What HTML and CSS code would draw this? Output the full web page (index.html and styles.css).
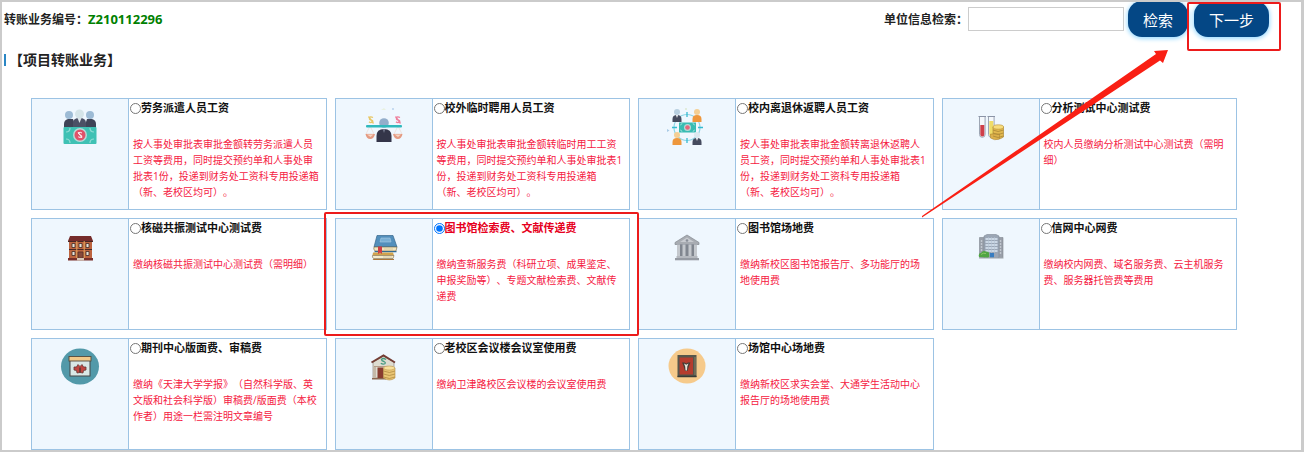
FILE: index.html
```html
<!DOCTYPE html>
<html lang="zh-CN">
<head>
    <meta charset="UTF-8">
    <meta name="viewport" content="width=device-width, initial-scale=1.0">
    <title>项目转账业务</title>
    <link rel="stylesheet" href="styles.css">
</head>
<body>

<form class="page">
    <!-- 顶部：业务编号和检索 -->
    <header class="topbar">
        <div class="biz-no">转账业务编号：<span class="biz-no-value">Z210112296</span></div>
        <div class="search">
            <label for="unitSearch">单位信息检索：</label>
            <input type="text" id="unitSearch" name="unitSearch">
            <button type="button" class="btn">检索</button>
            <div class="next-step">
                <button type="button" class="btn">下一步</button>
            </div>
        </div>
    </header>

    <h1 class="section-title">【项目转账业务】</h1>

    <!-- 业务列表 -->
    <div class="card-grid">
        <div class="card">
            <div class="card-icon">
                <svg viewBox="0 0 40 40" aria-hidden="true">
                    <path d="M4 21v-4q0-4 4-5h5l3 9zM36 21v-4q0-4-4-5h-5l-3 9z" fill="#3f4357"/>
                    <circle cx="9" cy="8" r="4" fill="#9dbbd5"/>
                    <circle cx="30" cy="8" r="4" fill="#9dbbd5"/>
                    <path d="M13 21v-5q0-5 6.500-5t6.500 5v5z" fill="#4b5065"/>
                    <path d="M17.500 11l2 5 2-5z" fill="#dfe6ea"/>
                    <circle cx="19.500" cy="7" r="4.500" fill="#d5e4e8"/>
                    <rect x="3.500" y="20" width="33" height="17" rx="1" fill="#3fc1b4"/>
                    <path d="M6 25q4 0 4-4M34 25q-4 0-4-4M6 32q4 0 4 4M34 32q-4 0-4 4" fill="none" stroke="#8fdcd4" stroke-width="1.200"/>
                    <circle cx="20" cy="28" r="7" fill="#b9d9d8"/>
                    <circle cx="20" cy="28" r="5.500" fill="#e0526a"/>
                    <path d="M22 26q-2-1.500-3.500 0 0 1.300 1.700 1.800 2 .6 1.600 2-1.600 1.400-3.600 0M18 25l4 6" fill="none" stroke="#fff" stroke-width=".9"/>
                </svg>
            </div>
            <div class="card-body">
                <label class="card-title"><input type="radio" name="biz">劳务派遣人员工资</label>
                <p class="card-desc">按人事处审批表审批金额转劳务派遣人员工资等费用，同时提交预约单和人事处审批表1份，投递到财务处工资科专用投递箱（新、老校区均可）。</p>
            </div>
        </div>

        <div class="card">
            <div class="card-icon">
                <svg viewBox="0 0 40 40" aria-hidden="true">
                    <path d="M17 2.500l3-1 2 1z" fill="#e3ebc4"/>
                    <circle cx="29" cy="2" r="1" fill="#b9d2ec"/>
                    <path d="M9 10.500q-3-1.500-3.500.5t2 2q2 .8 1 2.200-2 1-3.500-.4M4.500 9.500l5 7" fill="none" stroke="#e8c766" stroke-width="1.300"/>
                    <path d="M36 10.500q-3-1.500-3.500.5t2 2q2 .8 1 2.200-2 1-3.500-.4M31.500 9.500l5 7" fill="none" stroke="#ee7d9a" stroke-width="1.300"/>
                    <path d="M6 19l-4 8h8zM34 19l-4 8h8z" fill="none" stroke="#edd5cb" stroke-width=".6"/>
                    <circle cx="20" cy="16" r="4.800" fill="#93aecb"/>
                    <rect x="2" y="18" width="36" height="2.500" rx="1" fill="#30b9bd"/>
                    <path d="M1.500 27h9.500q-1 5-4.800 5t-4.700-5zM29 27h9.500q-1 5-4.700 5T29 27z" fill="#e49b83"/>
                    <path d="M3 27.500h6.500l-3 2.500zM30.500 27.500H37L34 30z" fill="#f6d6c4"/>
                    <path d="M12.500 35v-6q0-7 7.500-7t7.500 7v6z" fill="#343549"/>
                    <path d="M18.500 22h3l-1.500 4z" fill="#6f7388"/>
                </svg>
            </div>
            <div class="card-body">
                <label class="card-title"><input type="radio" name="biz">校外临时聘用人员工资</label>
                <p class="card-desc">按人事处审批表审批金额转临时用工工资等费用，同时提交预约单和人事处审批表1份，投递到财务处工资科专用投递箱（新、老校区均可）。</p>
            </div>
        </div>

        <div class="card">
            <div class="card-icon">
                <svg viewBox="0 0 40 40" aria-hidden="true">
                    <circle cx="20" cy="20.500" r="13" fill="none" stroke="#8fd6e6" stroke-width="1.200"/>
                    <path d="M20 5v5M20 31v5M5 20.500h5M31 20.500h5" stroke="#36bad0" stroke-width="1.300"/>
                    <path d="M0 22l2.500 1.500L0 25z" fill="#a9cbe6"/>
                    <circle cx="19" cy="2" r="1" fill="#dce8d0"/>
                    <rect x="12" y="15.500" width="17" height="10" fill="#38bcb3"/>
                    <path d="M13 18q2 0 2-2M28 18q-2 0-2-2M13 23q2 0 2 2M28 23q-2 0-2 2" fill="none" stroke="#a1e0da" stroke-width=".8"/>
                    <circle cx="20.500" cy="20.500" r="3.500" fill="#b5d9d6"/>
                    <circle cx="20.500" cy="20.500" r="2.300" fill="#e4667b"/>
                    <circle cx="10" cy="5" r="3" fill="#b8cfe0"/>
                    <path d="M5.500 15v-3q0-4 4.500-4t4.500 4v3z" fill="#454b5e"/>
                    <circle cx="30" cy="5" r="3" fill="#f4cf94"/>
                    <path d="M25.500 15v-3q0-4 4.500-4t4.500 4v3z" fill="#ee973c"/>
                    <circle cx="10" cy="28" r="3" fill="#f4cf94"/>
                    <path d="M5.500 38v-3q0-4 4.500-4t4.500 4v3z" fill="#ee973c"/>
                    <circle cx="30" cy="28" r="3" fill="#dce8ef"/>
                    <path d="M25.500 38v-3q0-4 4.500-4t4.500 4v3z" fill="#454b5e"/>
                    <path d="M9 8h2l-1 3zM29 31h2l-1 3z" fill="#fff"/>
                </svg>
            </div>
            <div class="card-body">
                <label class="card-title"><input type="radio" name="biz">校内离退休返聘人员工资</label>
                <p class="card-desc">按人事处审批表审批金额转离退休返聘人员工资，同时提交预约单和人事处审批表1份，投递到财务处工资科专用投递箱（新、老校区均可）。</p>
            </div>
        </div>

        <div class="card">
            <div class="card-icon">
                <svg viewBox="0 0 40 40" aria-hidden="true">
                    <path d="M8.500 9.500v18a2.800 2.800 0 0 0 5.600 0v-18z" fill="#f4f8fc" stroke="#939cac" stroke-width=".9"/>
                    <path d="M9.300 18h4v9.500a2 2 0 0 1-4 0z" fill="#cf3f49"/>
                    <path d="M17.500 9.500v18a2.800 2.800 0 0 0 5.600 0v-18z" fill="#f4f8fc" stroke="#939cac" stroke-width=".9"/>
                    <path d="M18.300 14h4v13.500a2 2 0 0 1-4 0z" fill="#efdc67"/>
                    <path d="M7.500 9.500h7.500M16.500 9.500h7.500" stroke="#8b94a7" stroke-width="1.200"/>
                    <path d="M22 20v10q5 4 10.500 0V20z" fill="#e2b84e" stroke="#a67f2b" stroke-width=".6"/>
                    <path d="M19.500 27v4q4 3 9 1v-5z" fill="#dcb04a" stroke="#a67f2b" stroke-width=".5"/>
                    <path d="M22 23q5 3 10.500 0M22 26q5 3 10.500 0M22 29q5 3 10.500 0" fill="none" stroke="#a98736" stroke-width=".8"/>
                    <ellipse cx="27.300" cy="20" rx="5.300" ry="2.200" fill="#f7dc7c" stroke="#b58d32" stroke-width=".6"/>
                </svg>
            </div>
            <div class="card-body">
                <label class="card-title"><input type="radio" name="biz">分析测试中心测试费</label>
                <p class="card-desc">校内人员缴纳分析测试中心测试费（需明细）</p>
            </div>
        </div>

        <div class="card">
            <div class="card-icon">
                <svg viewBox="0 0 40 40" aria-hidden="true">
                    <rect x="9" y="13" width="23" height="19" fill="#bd643f"/>
                    <path d="M8 14l2-5h21l2 5z" fill="#752c2b"/>
                    <path d="M8 14.500h25M9 22.500h23" stroke="#4a2725" stroke-width="1"/>
                    <g fill="#e4e3dc" stroke="#51352e" stroke-width=".9">
                        <path d="M12 16.500h3v4h-3zM19 16.500h3v4h-3zM26 16.500h3v4h-3zM12 24.500h3v4h-3zM26 24.500h3v4h-3z"/>
                    </g>
                    <path d="M16.800 14v17M24.200 14v17" stroke="#e3a85e" stroke-width="1"/>
                    <path d="M18 31v-6h5v6z" fill="#87493b" stroke="#57302a" stroke-width=".8"/>
                    <path d="M8 31h25v2.500H8z" fill="#792f2b"/>
                    <path d="M17 31h7v2.500h-7z" fill="#d9c9b9"/>
                </svg>
            </div>
            <div class="card-body">
                <label class="card-title"><input type="radio" name="biz">核磁共振测试中心测试费</label>
                <p class="card-desc">缴纳核磁共振测试中心测试费（需明细）</p>
            </div>
        </div>

        <div class="card card-selected">
            <div class="card-icon">
                <svg viewBox="0 0 40 40" aria-hidden="true">
                    <path d="M13 8.500h16L33 20H10z" fill="#528fbc" stroke="#36658b" stroke-width=".7"/>
                    <path d="M17 11h9l1 4H16z" fill="#79afd5" stroke="#a8cbe2" stroke-width=".6"/>
                    <path d="M10 20h23l-1 4H11q-2-2-1-4z" fill="#f1e5bf" stroke="#75613e" stroke-width=".6"/>
                    <path d="M11 24h21.500v1.200H10z" fill="#326b95"/>
                    <path d="M9 25.500h20l1 3H8.500z" fill="#d1a34c"/>
                    <path d="M8.500 28.500H30L29 31.500H9.500q-1.700-1.500-1-3z" fill="#f4eccd" stroke="#796443" stroke-width=".6"/>
                    <path d="M8.500 32H30v1H9.500z" fill="#a9773b"/>
                    <path d="M14 19.500h4v7.500l-2-1.500-2 1.500z" fill="#cd3e46"/>
                    <path d="M20 22h9M19 30h9" stroke="#cbbd94" stroke-width=".7"/>
                </svg>
            </div>
            <div class="card-body">
                <label class="card-title"><input type="radio" name="biz" checked>图书馆检索费、文献传递费</label>
                <p class="card-desc">缴纳查新服务费（科研立项、成果鉴定、申报奖励等）、专题文献检索费、文献传递费</p>
            </div>
        </div>

        <div class="card">
            <div class="card-icon">
                <svg viewBox="0 0 40 40" aria-hidden="true">
                    <path d="M8 15.500L20 8l12 7.500v2H8z" fill="#a8acb2" stroke="#858a91" stroke-width=".7"/>
                    <path d="M13 15l7-4.500 7 4.500z" fill="#c8cbd0"/>
                    <circle cx="20" cy="13.500" r="1.300" fill="#898f98"/>
                    <rect x="10" y="17.500" width="20" height="12" fill="#80868f"/>
                    <path d="M10 17.500h3v12h-3zM15.500 17.500h3v12h-3zM21.500 17.500h3v12h-3zM27 17.500h3v12h-3z" fill="#c4c8cd"/>
                    <path d="M9.500 29h21v2h-21z" fill="#b5b9bf"/>
                    <path d="M8 31h24v2.300H8z" fill="#969ba3"/>
                </svg>
            </div>
            <div class="card-body">
                <label class="card-title"><input type="radio" name="biz">图书馆场地费</label>
                <p class="card-desc">缴纳新校区图书馆报告厅、多功能厅的场地使用费</p>
            </div>
        </div>

        <div class="card">
            <div class="card-icon">
                <svg viewBox="0 0 40 40" aria-hidden="true">
                    <path d="M8.500 10.500h5v20h-5zM27 10.500h5v20h-5z" fill="#999fa9" stroke="#80868f" stroke-width=".6"/>
                    <path d="M13 9l3-1.500h9L28 9v21.500H13z" fill="#9ba6b5" stroke="#808995" stroke-width=".6"/>
                    <path d="M14.500 12h12M14.500 15h12M14.500 18h12M14.500 21h12M14.500 24h12" stroke="#dce8f3" stroke-width="1.600"/>
                    <path d="M17.500 10v16M20.500 10v16M23.500 10v16" stroke="#b4c3d4" stroke-width=".6"/>
                    <path d="M29.500 13v15M10.500 13v12" stroke="#c1c7cf" stroke-width="1.400" stroke-dasharray="2 1"/>
                    <path d="M19 26h4v4.500h-4z" fill="#387dc1"/>
                    <path d="M8 30.500h24.500v1H8z" fill="#9da2a8"/>
                    <path d="M8 30q-1-4 2-4 2-3 5-1.500 4 0 3 3.500 1 2-1 2.500z" fill="#50a543"/>
                    <path d="M10 27.500q2-2 5-1" stroke="#8cc668" stroke-width="1" fill="none"/>
                </svg>
            </div>
            <div class="card-body">
                <label class="card-title"><input type="radio" name="biz">信网中心网费</label>
                <p class="card-desc">缴纳校内网费、域名服务费、云主机服务费、服务器托管费等费用</p>
            </div>
        </div>

        <div class="card">
            <div class="card-icon">
                <svg viewBox="0 0 40 40" aria-hidden="true">
                    <ellipse cx="20" cy="19.500" rx="19" ry="18" fill="#5299a9"/>
                    <rect x="10" y="13" width="20" height="16" fill="#d9e8e6" stroke="#454746" stroke-width="1"/>
                    <rect x="9" y="9.500" width="22" height="4.500" fill="#f0c989" stroke="#55493b" stroke-width=".9"/>
                    <path d="M20 19.500l-2-2-1.500 2.500-2.500 0 0 3 2.500.5.500 2.500 3-.5 3 .5.500-2.500 2.500-.5 0-3-2.500 0-1.500-2.500z" fill="#c24741" stroke="#633936" stroke-width=".8"/>
                    <path d="M20 20.500v5" stroke="#56372f" stroke-width="1.500"/>
                </svg>
            </div>
            <div class="card-body">
                <label class="card-title"><input type="radio" name="biz">期刊中心版面费、审稿费</label>
                <p class="card-desc">缴纳《天津大学学报》（自然科学版、英文版和社会科学版）审稿费/版面费（本校作者）用途一栏需注明文章编号</p>
            </div>
        </div>

        <div class="card">
            <div class="card-icon">
                <svg viewBox="0 0 40 40" aria-hidden="true">
                    <path d="M9 15l10.500-6L30 15v16H9z" fill="#dedcd0" stroke="#827366" stroke-width=".6"/>
                    <path d="M7.500 15.500L19.500 8.500 31 15.500" fill="none" stroke="#733d34" stroke-width="2"/>
                    <path d="M22 12.500q-3-2-4.500 0 0 1.500 2.500 2 2 1 .8 2.200-1.800 1-4-.5" fill="none" stroke="#459b81" stroke-width="1.300"/>
                    <path d="M10 19.500h19" stroke="#b49c87" stroke-width="1"/>
                    <path d="M13.500 20.500h6V31h-6z" fill="#893c2f"/>
                    <path d="M9 20h3v11H9z" fill="#c4b8a7"/>
                    <path d="M8 31h14v1.500H8z" fill="#8b6851"/>
                    <path d="M19.500 21v10q6 4 11.500 0V21z" fill="#e9c574" stroke="#b58e45" stroke-width=".6"/>
                    <path d="M19.500 24q6 3 11.500 0M19.500 27q6 3 11.500 0M19.500 30q6 3 11.500 0" fill="none" stroke="#b18b43" stroke-width=".8"/>
                    <ellipse cx="25.200" cy="21" rx="5.700" ry="2" fill="#f7e09c" stroke="#c09b50" stroke-width=".6"/>
                </svg>
            </div>
            <div class="card-body">
                <label class="card-title"><input type="radio" name="biz">老校区会议楼会议室使用费</label>
                <p class="card-desc">缴纳卫津路校区会议楼的会议室使用费</p>
            </div>
        </div>

        <div class="card">
            <div class="card-icon">
                <svg viewBox="0 0 40 40" aria-hidden="true">
                    <ellipse cx="20" cy="19" rx="18.500" ry="17.500" fill="#f6ca8b"/>
                    <path d="M10.500 8h19v22h-19z" fill="#57564b"/>
                    <path d="M12.500 10.500h13.500v17H12.500z" fill="#b53c2e"/>
                    <path d="M28 10v18" stroke="#858067" stroke-width="1"/>
                    <path d="M10.500 29.500h19" stroke="#373a36" stroke-width="1.500"/>
                    <path d="M15 15.500l2.500 0 1.800 1 1.700-1 2.500 0-1.500 3.500-1.500 5h-2.500l-1.500-5z" fill="#443d36"/>
                    <path d="M17 16.500l2.300 1.200 2.200-1.200-1.200 3-.3 4h-1.500l-.3-4z" fill="#e7e5db"/>
                </svg>
            </div>
            <div class="card-body">
                <label class="card-title"><input type="radio" name="biz">场馆中心场地费</label>
                <p class="card-desc">缴纳新校区求实会堂、大通学生活动中心报告厅的场地使用费</p>
            </div>
        </div>
    </div>

    <!-- 指向“下一步”的箭头 -->
    <svg class="guide-arrow" viewBox="0 0 248 168" aria-hidden="true">
        <path d="M1 166L235 4l-2-3 14-1-5 13-3-2.500L1 167.500z" fill="#f91f14"/>
    </svg>
</form>

</body>
</html>
```

FILE: styles.css
```css
* {
    box-sizing: border-box;
}

body {
    margin: 0;
    font-family: "Open Sans", "Noto Sans CJK SC", sans-serif;
    color: #222;
    background-color: #fff;
    text-spacing-trim: space-all;
}

.page {
    position: relative;
    min-height: 100vh;
    border: 2px solid #cbcbcb;
    border-right-width: 3px;
    overflow: hidden;
}

/* 顶部 */
.topbar {
    display: flex;
    justify-content: space-between;
    align-items: center;
    height: 34px;
    padding: 0 32px 0 2px;
    font-size: 12px;
    font-weight: bold;
}

.biz-no-value {
    color: #008000;
    font-size: 13px;
}

.search {
    display: flex;
    align-items: center;
}

.search input {
    width: 156px;
    height: 24px;
    margin-right: 4px;
    border: 1px solid #ccc;
    background-color: #fff;
}

.btn {
    height: 36px;
    padding: 0 15px;
    border: none;
    border-radius: 14px;
    color: #fff;
    background-color: #044785;
    box-shadow: 0 1px 4px 1px #9fdcff;
    font-family: inherit;
    font-size: 15px;
    cursor: pointer;
}

.next-step {
    position: relative;
    margin-left: 6px;
}

/* 红色标注框 */
.next-step::after,
.card-selected::after {
    content: "";
    position: absolute;
    z-index: 1;
    border: 2px solid #ec1b1b;
    border-radius: 2px;
    pointer-events: none;
}

.next-step::after {
    inset: 1px -12px -14px -7px;
}

/* 标题 */
.section-title {
    display: flex;
    align-items: center;
    margin: 14px 0 28px 2px;
    font-size: 14px;
    line-height: 20px;
}

.section-title::before {
    content: "";
    width: 2px;
    height: 12px;
    margin-right: 3px;
    background-color: #2a86c4;
}

/* 业务列表 */
.card-grid {
    display: grid;
    grid-template-columns: repeat(4, 1fr);
    gap: 8px;
    padding: 0 64px 0 29px;
}

.card {
    position: relative;
    display: flex;
    min-height: 112px;
    border: 1px solid #9cc3e4;
}

.card-icon {
    flex: 0 0 97px;
    padding-top: 8px;
    border-right: 1px solid #9cc3e4;
    background-color: #eff7fe;
    text-align: center;
}

.card-icon svg {
    width: 40px;
    height: 40px;
}

.card-body {
    flex: 1;
    padding: 1px 5px 0 1px;
}

.card-title {
    display: flex;
    align-items: center;
    color: #111;
    font-size: 11px;
    font-weight: bold;
    line-height: 16px;
}

.card-title input {
    width: 11px;
    height: 11px;
    margin: 0;
}

.card-desc {
    margin: 20px 0 0 3px;
    color: #f5203f;
    font-size: 10px;
    line-height: 16px;
}

.card-selected .card-title {
    color: #e60020;
}

.card-selected::after {
    inset: -7px -10px -7px -12px;
}

.guide-arrow {
    position: absolute;
    z-index: 1;
    top: 48px;
    right: 132px;
    width: 248px;
    height: 168px;
}
```
